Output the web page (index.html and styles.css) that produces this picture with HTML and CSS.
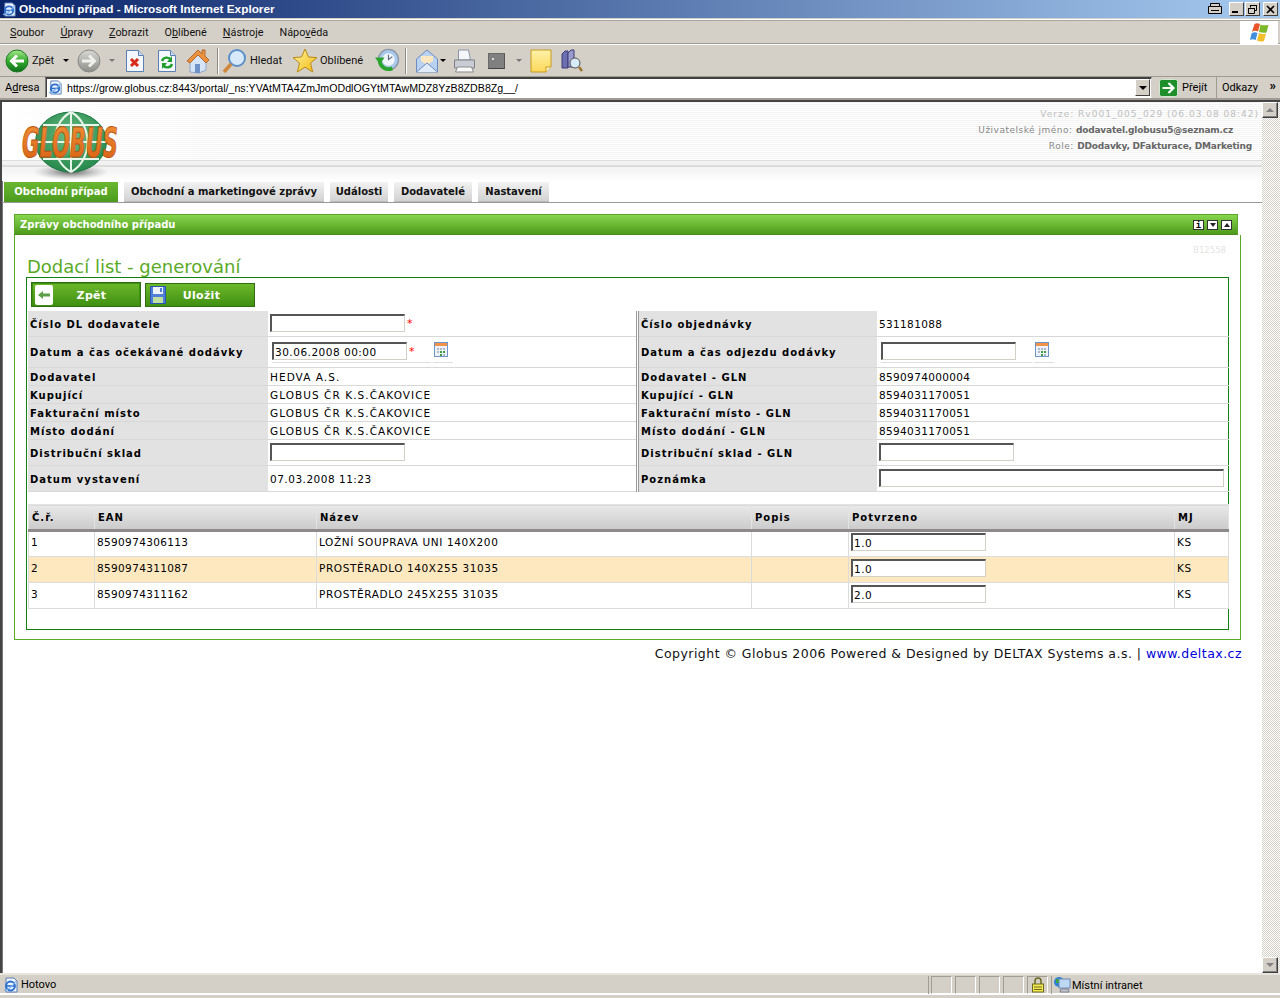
FILE: index.html
```
<!DOCTYPE html>
<html lang="cs">
<head>
<meta charset="utf-8">
<title>Obchodní případ - Microsoft Internet Explorer</title>
<link rel="stylesheet" href="styles.css">
</head>
<body>
<svg class="defs" width="0" height="0" aria-hidden="true">
  <defs>
    <linearGradient id="gG" x1="0" y1="0" x2="0" y2="1"><stop offset="0" stop-color="#a6e68e"/><stop offset=".5" stop-color="#35ad2e"/><stop offset="1" stop-color="#0d6d1a"/></linearGradient>
    <linearGradient id="gS" x1="0" y1="0" x2="0" y2="1"><stop offset="0" stop-color="#d8d8d4"/><stop offset="1" stop-color="#8d8d88"/></linearGradient>
    <linearGradient id="gY" x1="0" y1="0" x2="1" y2="1"><stop offset="0" stop-color="#fff6a0"/><stop offset="1" stop-color="#f2b810"/></linearGradient>
    <linearGradient id="gN" x1="0" y1="0" x2="0" y2="1"><stop offset="0" stop-color="#fff3a8"/><stop offset="1" stop-color="#fbd75a"/></linearGradient>
    <symbol id="ie" viewBox="0 0 16 16">
      <path d="M3 1h8l3 3v11H3z" fill="#eef4fc" stroke="#5a7fb5"/>
      <circle cx="7.500" cy="9" r="4.400" fill="none" stroke="#2b6fd0" stroke-width="2"/>
      <path d="M3.500 9h8" stroke="#2b6fd0" stroke-width="1.600"/>
      <path d="M1 13c3 1 8-3 12-9" fill="none" stroke="#7fb0ea" stroke-width="1.200"/>
    </symbol>
    <symbol id="cal" viewBox="0 0 14 15">
      <rect x=".5" y=".5" width="13" height="14" fill="#eef3fb" stroke="#6f94c8"/>
      <rect x="1" y="1" width="12" height="3" fill="#f0924a"/>
      <path d="M3 6h2v2H3zM6 6h2v2H6zM9 6h2v2H9zM3 9h2v2H3zM9 12h2v2H9z" fill="#aeb9c9"/>
      <path d="M6 9h2v2H6zM9 9h2v2H9zM6 12h2v2H6z" fill="#3f9e3c"/>
    </symbol>
  </defs>
</svg>

<header class="titlebar">
  <svg class="ti-ico"><use href="#ie"/></svg>
  <span class="ti-text">Obchodní případ - Microsoft Internet Explorer</span>
  <svg class="ti-print" viewBox="0 0 16 14"><path d="M3.500 1.500h9v3h2v7h-13v-7h2zM3.500 4.500h9M4 8.500h8" fill="#d4d0c8" stroke="#000"/></svg>
  <span class="win-btn win-min"><i></i></span>
  <span class="win-btn"><svg viewBox="0 0 11 11"><path d="M3.500 3.500V1.500h6v5h-2M1.500 4.500h6v5h-6z" fill="none" stroke="#000"/><path d="M3 1.500h7M1 4.500h7" stroke="#000"/></svg></span>
  <span class="win-btn win-close"><svg viewBox="0 0 11 11"><path d="M2 2l7 7M9 2l-7 7" stroke="#000" stroke-width="1.600"/></svg></span>
</header>

<nav class="menubar">
  <span class="mi"><u>S</u>oubor</span><span class="mi"><u>Ú</u>pravy</span><span class="mi"><u>Z</u>obrazit</span><span class="mi">O<u>b</u>líbené</span><span class="mi"><u>N</u>ástroje</span><span class="mi">Nápo<u>v</u>ěda</span>
  <span class="winlogo">
    <svg viewBox="0 0 20 19" width="20" height="19">
      <path d="M3 9c2-1.500 4-1.500 6-.5L11 1C9 0 7 0 5.500 1z" fill="#e8552a"/>
      <path d="M11.500 1.500c2 1 4 1 8 .5l-2 7.500c-3 .5-5 0-7.500-.5z" fill="#7cb82a"/>
      <path d="M2.500 10.500c2-1.500 4-1.500 6-.5l-1.800 7c-2-1-4-1-5.700 0z" fill="#3f8ee0"/>
      <path d="M10 10c2 1 4 1.500 7 .5L15 18c-3 1-5 .5-7-.5z" fill="#f4bd2a"/>
    </svg>
  </span>
</nav>

<div class="toolbar">
  <svg class="tb-round" viewBox="0 0 24 24"><circle cx="12" cy="12" r="11" fill="url(#gG)" stroke="#1f7a22"/><path d="M19 12H7M12 6.500L6.500 12l5.500 5.500" fill="none" stroke="#fff" stroke-width="3"/></svg>
  <span class="tb-label tb-back">Zpět</span>
  <span class="caret"></span>
  <svg class="tb-round tb-fwd" viewBox="0 0 24 24"><circle cx="12" cy="12" r="11" fill="url(#gS)" stroke="#8a8a86"/><path d="M5 12h12M12 6.500l5.500 5.500-5.500 5.500" fill="none" stroke="#efefec" stroke-width="3"/></svg>
  <span class="caret caret-dim"></span>
  <svg class="tb-ico tb-stop" viewBox="0 0 20 24"><path d="M1.500 1.500h12l5 5v16h-17z" fill="#f4f7fd" stroke="#5a7fb5"/><path d="M13.500 1.500v5h5" fill="#c9daf2" stroke="#5a7fb5"/><path d="M6 10l7 7M13 10l-7 7" stroke="#d82a18" stroke-width="3"/></svg>
  <svg class="tb-ico tb-ref" viewBox="0 0 20 24"><path d="M1.500 1.500h12l5 5v16h-17z" fill="#f4f7fd" stroke="#5a7fb5"/><path d="M13.500 1.500v5h5" fill="#c9daf2" stroke="#5a7fb5"/><path d="M5 12a5 5 0 0 1 9-1M15 15a5 5 0 0 1-9 1" fill="none" stroke="#1f9d2a" stroke-width="2.400"/><path d="M15 7v6h-5zM5 20v-6h5z" fill="#1f9d2a"/></svg>
  <svg class="tb-ico tb-home" viewBox="0 0 24 26"><path d="M4 14v10l9 1 7-3V13l-8-8z" fill="#d5e4f7" stroke="#8ca4c8"/><path d="M9 16h5v9H9z" fill="#6f93c8"/><path d="M12 2L1 13l3 2 8-8 8 8 3-3-4-4V2h-3v4z" fill="#e9913e" stroke="#b66a2a"/></svg>
  <i class="tb-sep"></i>
  <svg class="tb-ico tb-search" viewBox="0 0 24 26"><circle cx="15" cy="10" r="8" fill="#d8eafa" stroke="#5c90c8" stroke-width="2"/><path d="M9 16l-7 8" stroke="#d0893a" stroke-width="3.500"/></svg>
  <span class="tb-label tb-hl">Hledat</span>
  <svg class="tb-ico tb-star" viewBox="0 0 26 26"><path d="M13 1l3.500 8 8.500.6-6.500 5.500 2.200 8.900L13 19.200 5.300 24l2.200-8.900L1 9.600 9.500 9z" fill="url(#gY)" stroke="#b98a14"/></svg>
  <span class="tb-label tb-ob">Oblíbené</span>
  <svg class="tb-ico tb-hist" viewBox="0 0 26 26"><circle cx="14" cy="12" r="10.500" fill="#a9c8ea" stroke="#8c98a8" stroke-width="1.400"/><circle cx="14" cy="12" r="6.500" fill="#f2f6fb"/><path d="M14 7v5l4-3" fill="none" stroke="#5d6a80" stroke-width="1.200"/><path d="M5 13a9 9 0 0 0 13 8" fill="none" stroke="#2aa52e" stroke-width="4"/><path d="M0 10h10l-5 7z" fill="#2aa52e"/></svg>
  <i class="tb-sep tb-sep2"></i>
  <svg class="tb-ico tb-mail" viewBox="0 0 24 26"><path d="M1.500 11L12 2l10.500 9v13h-21z" fill="#b9d2f2" stroke="#6c8cc0"/><path d="M6 13V8h12v5l-6 4z" fill="#fbe7c2"/><path d="M1.500 24L12 15l10.500 9" fill="#e0ecfb" stroke="#6c8cc0"/></svg>
  <span class="caret caret-mail"></span>
  <svg class="tb-ico tb-print" viewBox="0 0 24 26"><path d="M6 2h10l2 10H6z" fill="#f4f6fa" stroke="#8b95a8"/><path d="M2 12h20v8H2z" fill="#c9ccd2" stroke="#7c7f86"/><path d="M5 19h14l2 5H3z" fill="#f8f8f8" stroke="#8b8b8b"/></svg>
  <span class="tb-dark"><i></i></span>
  <span class="caret caret-dim caret-dark"></span>
  <svg class="tb-ico tb-note" viewBox="0 0 22 24"><path d="M1 1h20v17l-5 5H1z" fill="url(#gN)" stroke="#c99a1e"/><path d="M16 23v-5h5" fill="#fff8cf" stroke="#c99a1e"/></svg>
  <svg class="tb-ico tb-res" viewBox="0 0 23 24"><path d="M2 5l3-3h3v17H2z" fill="#6d6fb0" stroke="#3c3d78"/><path d="M8 4l3-3h3v17H8z" fill="#9a9ccf" stroke="#3c3d78"/><circle cx="15" cy="14" r="5" fill="#d8ecf8" stroke="#555"/><path d="M19 18l3 4" stroke="#9c7232" stroke-width="2.500"/></svg>
</div>

<div class="addressbar">
  <span class="ad-label">A<u>d</u>resa</span>
  <div class="ad-field">
    <svg class="ad-ie"><use href="#ie"/></svg>
    <span class="ad-url">https://grow.globus.cz:8443/portal/_ns:YVAtMTA4ZmJmODdlOGYtMTAwMDZ8YzB8ZDB8Zg__/</span>
    <span class="ad-drop"><i></i></span>
  </div>
  <svg class="go-ico" viewBox="0 0 19 18"><rect x=".5" y=".5" width="18" height="17" rx="2" fill="#1e8f2a" stroke="#cfe6cf"/><path d="M3.500 9h11M9.500 4l5 5-5 5" fill="none" stroke="#fff" stroke-width="2.200"/></svg>
  <span class="go-text">Přejít</span>
  <span class="links">Odkazy<b>»</b></span>
</div>

<div class="browser">
  <main class="page">
    <div class="site-head">
      <svg class="logo" viewBox="0 0 106 70" role="img" aria-label="Globus">
        <defs>
          <radialGradient id="lg" cx=".5" cy=".4" r=".6"><stop offset="0" stop-color="#6ec088"/><stop offset="1" stop-color="#25884a"/></radialGradient>
          <radialGradient id="ls" cx=".5" cy=".5" r=".5"><stop offset="0" stop-color="#444" stop-opacity=".85"/><stop offset="1" stop-color="#999" stop-opacity="0"/></radialGradient>
          <linearGradient id="lo" x1="0" y1="0" x2="0" y2="1"><stop offset="0" stop-color="#f09238"/><stop offset="1" stop-color="#d85e12"/></linearGradient>
        </defs>
        <ellipse cx="54" cy="62" rx="38" ry="8" fill="url(#ls)"/>
        <ellipse cx="54" cy="32" rx="35.500" ry="30" fill="url(#lg)" stroke="#1e7a44"/>
        <path d="M19 32h70M26 15h56M26 49h56M54 2v60M54 2c-22 12-22 48 0 60M54 2c22 12 22 48 0 60" fill="none" stroke="#e8f6ea" stroke-width="2"/>
        <text class="logo-text" x="53" y="47" text-anchor="middle" textLength="96" lengthAdjust="spacingAndGlyphs">GLOBUS</text>
      </svg>
      <div class="site-info">
        <p class="si-line si-ver">Verze: Rv001_005_029 (06.03.08 08:42)</p>
        <p class="si-line si-user">Uživatelské jméno: <b>dodavatel.globusu5@seznam.cz</b></p>
        <p class="si-line si-role">Role: <b>DDodavky, DFakturace, DMarketing</b></p>
      </div>
    </div>

    <nav class="tabs">
      <a class="tab tab-on">Obchodní případ</a>
      <a class="tab">Obchodní a marketingové zprávy</a>
      <a class="tab">Události</a>
      <a class="tab">Dodavatelé</a>
      <a class="tab">Nastavení</a>
    </nav>

    <section class="panel">
      <div class="panel-head">
        <span>Zprávy obchodního případu</span>
        <span class="ph-btns">
          <i class="ph-btn ph-i">i</i>
          <i class="ph-btn"><em class="tri-d"></em></i>
          <i class="ph-btn"><em class="tri-u"></em></i>
        </span>
      </div>
      <div class="panel-body">
        <div class="code">B12558</div>
        <h1 class="page-title">Dodací list - generování</h1>
        <div class="box">
          <div class="actions">
            <button class="btn btn-focus" type="button">
              <span class="btn-ico"><svg viewBox="0 0 18 20" width="18" height="20"><rect width="18" height="20" rx="2" fill="#fff"/><path d="M3 10l5-4v2.500h7v3H8V14z" fill="#5a9e46"/></svg></span>
              <span class="btn-text">Zpět</span>
            </button>
            <button class="btn btn-save" type="button">
              <span class="btn-ico"><svg viewBox="0 0 16 18" width="16" height="18"><path d="M.5.500h15v17H.5z" fill="#4f7fd8" stroke="#2c55b0"/><path d="M3 1h10v7H3z" fill="#eef3fb"/><path d="M3 11h10v6H3z" fill="#bfe0a0"/><path d="M10 2h2v4h-2z" fill="#4f7fd8"/></svg></span>
              <span class="btn-text">Uložit</span>
            </button>
          </div>

          <div class="form">
            <div class="col">
              <div class="row r26"><div class="lab">Číslo DL dodavatele</div><div class="val"><input class="inp" type="text"><span class="req">*</span></div></div>
              <div class="row r31"><div class="lab">Datum a čas očekávané dodávky</div><div class="val val-date"><span class="under u-a"><input class="inp" type="text" value="30.06.2008 00:00"><span class="req">*</span></span><span class="under u-b"><svg class="cal"><use href="#cal"/></svg></span></div></div>
              <div class="row r18"><div class="lab">Dodavatel</div><div class="val val-caps">HEDVA A.S.</div></div>
              <div class="row r18"><div class="lab">Kupující</div><div class="val val-caps">GLOBUS ČR K.S.ČAKOVICE</div></div>
              <div class="row r18"><div class="lab">Fakturační místo</div><div class="val val-caps">GLOBUS ČR K.S.ČAKOVICE</div></div>
              <div class="row r18"><div class="lab">Místo dodání</div><div class="val val-caps">GLOBUS ČR K.S.ČAKOVICE</div></div>
              <div class="row r26"><div class="lab">Distribuční sklad</div><div class="val"><input class="inp" type="text"></div></div>
              <div class="row r26"><div class="lab">Datum vystavení</div><div class="val">07.03.2008 11:23</div></div>
            </div>
            <div class="col col-r">
              <div class="row r26"><div class="lab">Číslo objednávky</div><div class="val val-num">531181088</div></div>
              <div class="row r31"><div class="lab">Datum a čas odjezdu dodávky</div><div class="val val-date"><span class="under u-c"><input class="inp" type="text"></span><span class="under u-b"><svg class="cal"><use href="#cal"/></svg></span></div></div>
              <div class="row r18"><div class="lab">Dodavatel - GLN</div><div class="val val-num">8590974000004</div></div>
              <div class="row r18"><div class="lab">Kupující - GLN</div><div class="val val-num">8594031170051</div></div>
              <div class="row r18"><div class="lab">Fakturační místo - GLN</div><div class="val val-num">8594031170051</div></div>
              <div class="row r18"><div class="lab">Místo dodání - GLN</div><div class="val val-num">8594031170051</div></div>
              <div class="row r26"><div class="lab">Distribuční sklad - GLN</div><div class="val"><input class="inp" type="text"></div></div>
              <div class="row r26"><div class="lab">Poznámka</div><div class="val"><input class="inp inp-wide" type="text"></div></div>
            </div>
          </div>

          <table class="grid">
            <colgroup><col class="c1"><col class="c2"><col class="c3"><col class="c4"><col class="c5"><col class="c6"></colgroup>
            <thead><tr><th>Č.ř.</th><th>EAN</th><th>Název</th><th>Popis</th><th>Potvrzeno</th><th>MJ</th></tr></thead>
            <tbody>
              <tr><td>1</td><td class="td-num">8590974306113</td><td>LOŽNÍ SOUPRAVA UNI 140X200</td><td></td><td><input class="inp" type="text" value="1.0"></td><td>KS</td></tr>
              <tr class="hl"><td>2</td><td class="td-num">8590974311087</td><td>PROSTĚRADLO 140X255 31035</td><td></td><td><input class="inp" type="text" value="1.0"></td><td>KS</td></tr>
              <tr><td>3</td><td class="td-num">8590974311162</td><td>PROSTĚRADLO 245X255 31035</td><td></td><td><input class="inp" type="text" value="2.0"></td><td>KS</td></tr>
            </tbody>
          </table>
        </div>
      </div>
    </section>

    <footer class="copyright">Copyright © Globus 2006 Powered &amp; Designed by DELTAX Systems a.s. | <a>www.deltax.cz</a></footer>
  </main>

  <aside class="scrollbar">
    <span class="sb-btn"><i class="sb-up"></i></span>
    <span class="sb-btn"><i class="sb-down"></i></span>
  </aside>
</div>

<footer class="status">
  <svg class="st-ie"><use href="#ie"/></svg>
  <span class="st-text">Hotovo</span>
  <span class="st-cell"></span><span class="st-cell"></span><span class="st-cell"></span><span class="st-cell"></span>
  <span class="st-cell st-lock"><svg viewBox="0 0 14 16" width="14" height="16"><path d="M4 7V4a3 3 0 0 1 6 0v3" fill="none" stroke="#6d6a20" stroke-width="1.500"/><rect x="1.500" y="7" width="11" height="8" fill="#f5ea50" stroke="#6d6a20"/><path d="M3 10h8M3 12.500h8" stroke="#6d6a20"/></svg></span>
  <span class="st-zone">
    <svg viewBox="0 0 18 18" width="18" height="18"><circle cx="6" cy="6" r="5" fill="#2f7fd8"/><path d="M3 3h4v4H3z" fill="#3aa83c"/><rect x="6" y="3" width="11" height="9" fill="#bcd8f5" stroke="#6a86b0"/><path d="M8 13h7l1 3H7z" fill="#c6c9d2" stroke="#7b7f8a"/></svg>
    <span>Místní intranet</span>
  </span>
</footer>
</body>
</html>
```
FILE: styles.css
```
* { box-sizing: border-box; }
html, body { margin: 0; height: 998px; overflow: hidden; }
body { display: flex; flex-direction: column; background: #d4d0c8; color: #000; font: 11px "DejaVu Sans", Verdana, sans-serif; }
.defs { display: block; height: 0; flex: none; }

/* window chrome */
.titlebar { flex: none; height: 18px; display: flex; align-items: center; padding: 0 2px; background: linear-gradient(90deg, #0a246a 0%, #a6caf0 100%); }
.ti-ico { width: 15px; height: 15px; flex: none; }
.ti-text { margin-left: 2px; flex: 1; color: #fff; font: bold 11.800px/18px "Liberation Sans", Arial, sans-serif; }
.ti-print { width: 16px; height: 14px; margin-right: 5px; }
.win-btn { width: 15px; height: 14px; margin-left: 1px; display: flex; align-items: center; justify-content: center; background: #d4d0c8; border: 1px solid; border-color: #fff #404040 #404040 #fff; }
.win-btn svg { width: 11px; height: 11px; }
.win-min { align-items: flex-end; justify-content: flex-start; padding: 0 0 2px 2px; }
.win-min i { width: 6px; height: 2px; background: #000; }
.win-close { margin-left: 3px; }

.menubar { flex: none; height: 25px; margin-top: 1px; padding: 1px 0 0 10px; display: flex; align-items: center; gap: 16px; border-top: 1px solid #fff; border-bottom: 1px solid #a09c94; font: 10.800px Roboto, "Liberation Sans", sans-serif; box-shadow: inset 0 1px 0 #aaa69e; }
.mi { color: #111; }
.winlogo { margin-left: auto; width: 38px; height: 23px; margin-right: 2px; background: #fff; display: flex; align-items: center; justify-content: center; }

.toolbar { flex: none; height: 33px; padding: 0 0 0 5px; display: flex; align-items: center; border-top: 1px solid #fff; border-bottom: 1px solid #a09c94; font: 11px Roboto, "Liberation Sans", sans-serif; }
.tb-round { width: 24px; height: 24px; flex: none; }
.tb-label { color: #111; flex: none; }
.tb-back { margin-left: 3px; width: 24px; }
.caret { width: 0; height: 0; margin-left: 7px; border: 3px solid transparent; border-top: 3px solid #000; border-bottom: 0; flex: none; }
.tb-fwd { margin-left: 8px; }
.caret-dim { margin-left: 8px; border-top-color: #777; }
.tb-ico { flex: none; }
.tb-stop { width: 20px; height: 24px; margin-left: 10px; }
.tb-ref { width: 20px; height: 24px; margin-left: 12px; }
.tb-home { width: 24px; height: 26px; margin-left: 9px; }
.tb-sep { width: 2px; height: 26px; margin-left: 7px; background: linear-gradient(90deg, #8e8a82 50%, #fff 50%); flex: none; }
.tb-search { width: 24px; height: 26px; margin-left: 3px; }
.tb-hl { margin-left: 4px; width: 32px; }
.tb-star { width: 26px; height: 26px; margin-left: 10px; }
.tb-ob { margin-left: 2px; width: 43px; }
.tb-hist { width: 25px; height: 25px; margin-left: 12px; }
.tb-sep2 { margin-left: 5px; }
.tb-mail { width: 24px; height: 26px; margin-left: 8px; }
.caret-mail { margin-left: 1px; }
.tb-print { width: 25px; height: 26px; margin-left: 6px; }
.tb-dark { width: 17px; height: 16px; margin-left: 11px; background: #808080; border: 1px solid #6a6a6a; border-right-color: #555; border-bottom-color: #444; flex: none; }
.tb-dark i { display: block; width: 2px; height: 2px; background: #ddd; margin: 4px 0 0 3px; }
.caret-dark { margin-left: 11px; }
.tb-note { width: 22px; height: 24px; margin-left: 8px; }
.tb-res { width: 23px; height: 24px; margin-left: 8px; }

.addressbar { flex: none; height: 23px; display: flex; align-items: center; padding-left: 5px; border-bottom: 2px solid #a09c94; font: 11px Roboto, "Liberation Sans", sans-serif; }
.ad-label { width: 40px; flex: none; }
.ad-field { flex: none; width: 1107px; height: 21px; display: flex; align-items: center; background: #fff; border: 1px solid; border-color: #404040 #d4d0c8 #fff #808080; box-shadow: inset 1px 1px 0 #404040; padding-left: 2px; }
.ad-ie { width: 15px; height: 15px; flex: none; }
.ad-url { margin-left: 4px; flex: 1; font: 10.650px "Liberation Sans", Arial, sans-serif; white-space: nowrap; }
.ad-drop { width: 15px; height: 17px; margin-right: 1px; background: #d4d0c8; border: 1px solid; border-color: #fff #404040 #404040 #fff; display: flex; align-items: center; justify-content: center; }
.ad-drop i { border: 4px solid transparent; border-top: 4px solid #000; border-bottom: 0; }
.go-ico { width: 19px; height: 18px; margin-left: 7px; flex: none; }
.go-text { margin-left: 4px; width: 34px; flex: none; }
.links { flex: 1; padding: 0 4px 0 5px; height: 100%; display: flex; align-items: center; justify-content: space-between; border-left: 1px solid #a09c94; }
.links b { font-size: 13px; margin-top: -4px; }

/* browser viewport */
.browser { flex: none; height: 873px; display: flex; background: #fff; }
.page { flex: 1; min-width: 0; border-left: 2px solid #444; border-top: 2px solid #444; background: #fff; display: flex; flex-direction: column; box-shadow: inset 1px 1px 0 #777; }
.scrollbar { flex: none; width: 18px; display: flex; flex-direction: column; justify-content: space-between; background: repeating-conic-gradient(#fff 0 25%, #d4d0c8 0 50%) 0 0 / 2px 2px; border-top: 2px solid #444; }
.sb-btn { width: 16px; height: 16px; display: flex; align-items: center; justify-content: center; background: #d4d0c8; border: 1px solid; border-color: #fff #404040 #404040 #fff; box-shadow: inset -1px -1px 0 #808080; }
.sb-up { border: 4px solid transparent; border-bottom: 4px solid #808080; border-top: 0; }
.sb-down { border: 4px solid transparent; border-top: 4px solid #808080; border-bottom: 0; }

.site-head { flex: none; height: 79px; display: flex; justify-content: space-between; padding-left: 15px; background:
    linear-gradient(90deg, #fff 0, rgba(255,255,255,0) 230px) 0 0 / 100% 58px no-repeat,
    linear-gradient(180deg, rgba(255,255,255,0) 0 58px, #ddd 58px 59px, #f2f2f2 59px 63px, #dcdcdc 63px 65px, #f4f4f4 65px 68px, #fff 79px),
    repeating-linear-gradient(180deg, #f4f4f4 0 1px, #fff 1px 2px); }
.logo { width: 106px; height: 70px; margin-top: 8px; flex: none; overflow: visible; }
.logo-text { font: italic bold 40px "DejaVu Sans", Verdana, sans-serif; fill: url(#lo); stroke: #b8540e; stroke-width: 1px; }
.site-info { display: flex; flex-direction: column; align-items: flex-end; padding-top: 4px; }
.si-line { margin: 0; height: 16px; font-size: 9px; line-height: 16px; letter-spacing: .5px; color: #888; white-space: nowrap; }
.si-line b { color: #666; letter-spacing: -.18px; }
.si-ver { color: #bdbdbd; margin-right: 3px; letter-spacing: 1px; }
.si-user { margin-right: 29px; }
.si-role { margin-right: 10px; }

.tabs { flex: none; height: 22px; display: grid; grid-template-columns: 114px 200px 58px 78px 71px; gap: 6px; padding: 1px 0 0 2px; border-bottom: 1px solid #999; }
.tab { height: 20px; text-align: center; font: bold 10px/19px "DejaVu Sans", Verdana, sans-serif; color: #111; white-space: nowrap; background: linear-gradient(180deg, #f2f2f2, #d2d2d2); border-bottom: 1px solid #bbb; }
.tab-on { color: #fff; background: linear-gradient(180deg, #6ab72f, #4d9c1e); border-bottom-color: #4d9c1e; }

.panel { flex: none; width: 1227px; margin: 11px 0 0 12px; }
.panel-head { width: 1224px; height: 21px; padding: 0 5px; display: flex; align-items: center; justify-content: space-between; color: #fff; font: bold 10px "DejaVu Sans", Verdana, sans-serif; background: linear-gradient(180deg, #88d64e, #4c9a1a); border: 1px solid #5aa82a; border-bottom: 1px solid #4a8a20; }
.ph-btns { display: flex; gap: 3px; }
.ph-btn { width: 11px; height: 10px; display: flex; align-items: center; justify-content: center; background: #fff; border: 1px solid #333; color: #000; font: bold 9px/8px "DejaVu Sans Mono", monospace; }
.tri-d { border: 3px solid transparent; border-top: 4px solid #222; border-bottom: 0; }
.tri-u { border: 3px solid transparent; border-bottom: 4px solid #222; border-top: 0; }
.panel-body { height: 405px; padding: 0 11px; border: 1px solid #5aaa28; border-top: 0; }
.code { height: 21px; padding: 9px 3px 0 0; text-align: right; color: #e4e4e4; font-size: 8.500px; line-height: 12px; }
.page-title { margin: 0; height: 21px; padding-left: 1px; color: #5aaa28; font: 18px/22px "DejaVu Sans", Verdana, sans-serif; font-weight: normal; }
.box { height: 353px; padding: 4px 1px 0 1px; border: 1px solid #128012; }
.actions { display: flex; gap: 4px; padding-left: 3px; height: 29px; }
.btn { width: 110px; height: 25px; padding: 0 0 0 3px; display: flex; align-items: center; color: #fff; background: linear-gradient(180deg, #6db82a, #3f8f12); border: 1px solid #2f6f14; font: bold 11px "DejaVu Sans", Verdana, sans-serif; letter-spacing: .3px; }
.btn-save { height: 24px; margin-top: 1px; }
.btn-focus { box-shadow: inset 0 0 0 1px #3f8f12; }
.btn-ico { width: 18px; height: 20px; flex: none; display: flex; align-items: center; justify-content: center; }
.btn-text { flex: 1; text-align: center; padding-right: 10px; }
.btn-focus .btn-text { padding-top: 1px; }
.btn-save .btn-text { padding-right: 18px; }

.form { height: 180px; display: grid; grid-template-columns: 611px 590px; }
.col { display: flex; flex-direction: column; border-right: 3px double #999; }
.col-r { border-right: 0; }
.row { display: grid; grid-template-columns: 240px 1fr; align-items: stretch; border-bottom: 1px solid #d8d8d8; }
.col-r .row { grid-template-columns: 238px 1fr; }
.r26 { height: 26px; }
.r31 { height: 31px; }
.r18 { height: 18px; }
.r26 .inp { margin-top: -1px; }
.lab { padding: 1px 0 0 2px; display: flex; align-items: center; background: #e2e2e2; font: bold 10px "DejaVu Sans", Verdana, sans-serif; letter-spacing: 1px; }
.val { padding-left: 2px; display: flex; align-items: center; font-size: 10.500px; letter-spacing: .5px; }
.val-caps { letter-spacing: 1.05px; }
.val-num { letter-spacing: .35px; }
.inp { width: 135px; height: 18px; padding: 1px 1px 0; background: #fff; border-style: solid; border-width: 2px 1px 1px 2px; border-color: #555 #d4d0c8 #d4d0c8 #555; font: 10.500px "DejaVu Sans", Verdana, sans-serif; letter-spacing: .5px; color: #000; border-radius: 0; outline: 0; }
.inp-wide { width: 345px; }
.req { margin: 0 0 0 2px; color: #f00; font-size: 11px; }
.val-date { padding-left: 4px; align-items: flex-start; padding-top: 5px; gap: 2px; }
.under { height: 21px; display: flex; align-items: flex-start; border-bottom: 1px solid #ddd; }
.under .req { margin: 3px 0 0 2px; }
.u-a { width: 159px; }
.u-b { width: 20px; padding-left: 1px; }
.u-c { width: 151px; }
.cal { width: 14px; height: 15px; }

.grid { margin-top: 13px; width: 1200px; table-layout: fixed; border-collapse: collapse; }
.c1 { width: 66px; } .c2 { width: 222px; } .c3 { width: 435px; } .c4 { width: 97px; } .c5 { width: 326px; } .c6 { width: 54px; }
.grid th { height: 26px; padding: 1px 3px 0; text-align: left; font: bold 10px "DejaVu Sans", Verdana, sans-serif; letter-spacing: 1px; background: linear-gradient(180deg, #e9e9e9, #cbcbcb); border: 1px solid #e2e2e2; border-bottom: 3px solid #8e8a8a; }
.grid td { height: 26px; padding: 0 2px 4px; font-size: 10.500px; letter-spacing: .6px; border: 1px solid #dcdcdc; vertical-align: middle; }
.grid td.td-num { letter-spacing: .35px; }
.grid td .inp { display: block; }
.hl td { background: #fde8bf; }

.copyright { width: 1240px; margin-top: 5px; text-align: right; font-size: 12.500px; line-height: 18px; color: #111; letter-spacing: .47px; }
.copyright a { color: #0000d8; }

/* status bar */
.status { flex: none; height: 25px; display: flex; align-items: center; padding: 2px 0 5px 3px; gap: 3px; border-top: 2px solid #e8e5de; box-shadow: inset 0 -3px 0 #d4d0c8, inset 0 -5px 0 #fff; font: 11px Roboto, "Liberation Sans", sans-serif; }
.st-ie { width: 16px; height: 16px; flex: none; }
.st-text { flex: 1; height: 18px; line-height: 18px; margin: 0 -1px 0 -1px; border-right: 1px solid #a09c94; }
.st-cell { width: 21px; height: 18px; flex: none; border: 1px solid; border-color: #a09c94 #fff #fff #a09c94; display: flex; align-items: center; justify-content: center; }
.st-zone { width: 229px; height: 18px; flex: none; display: flex; align-items: center; gap: 1px; padding-left: 1px; border-left: 1px solid #a09c94; }
```
